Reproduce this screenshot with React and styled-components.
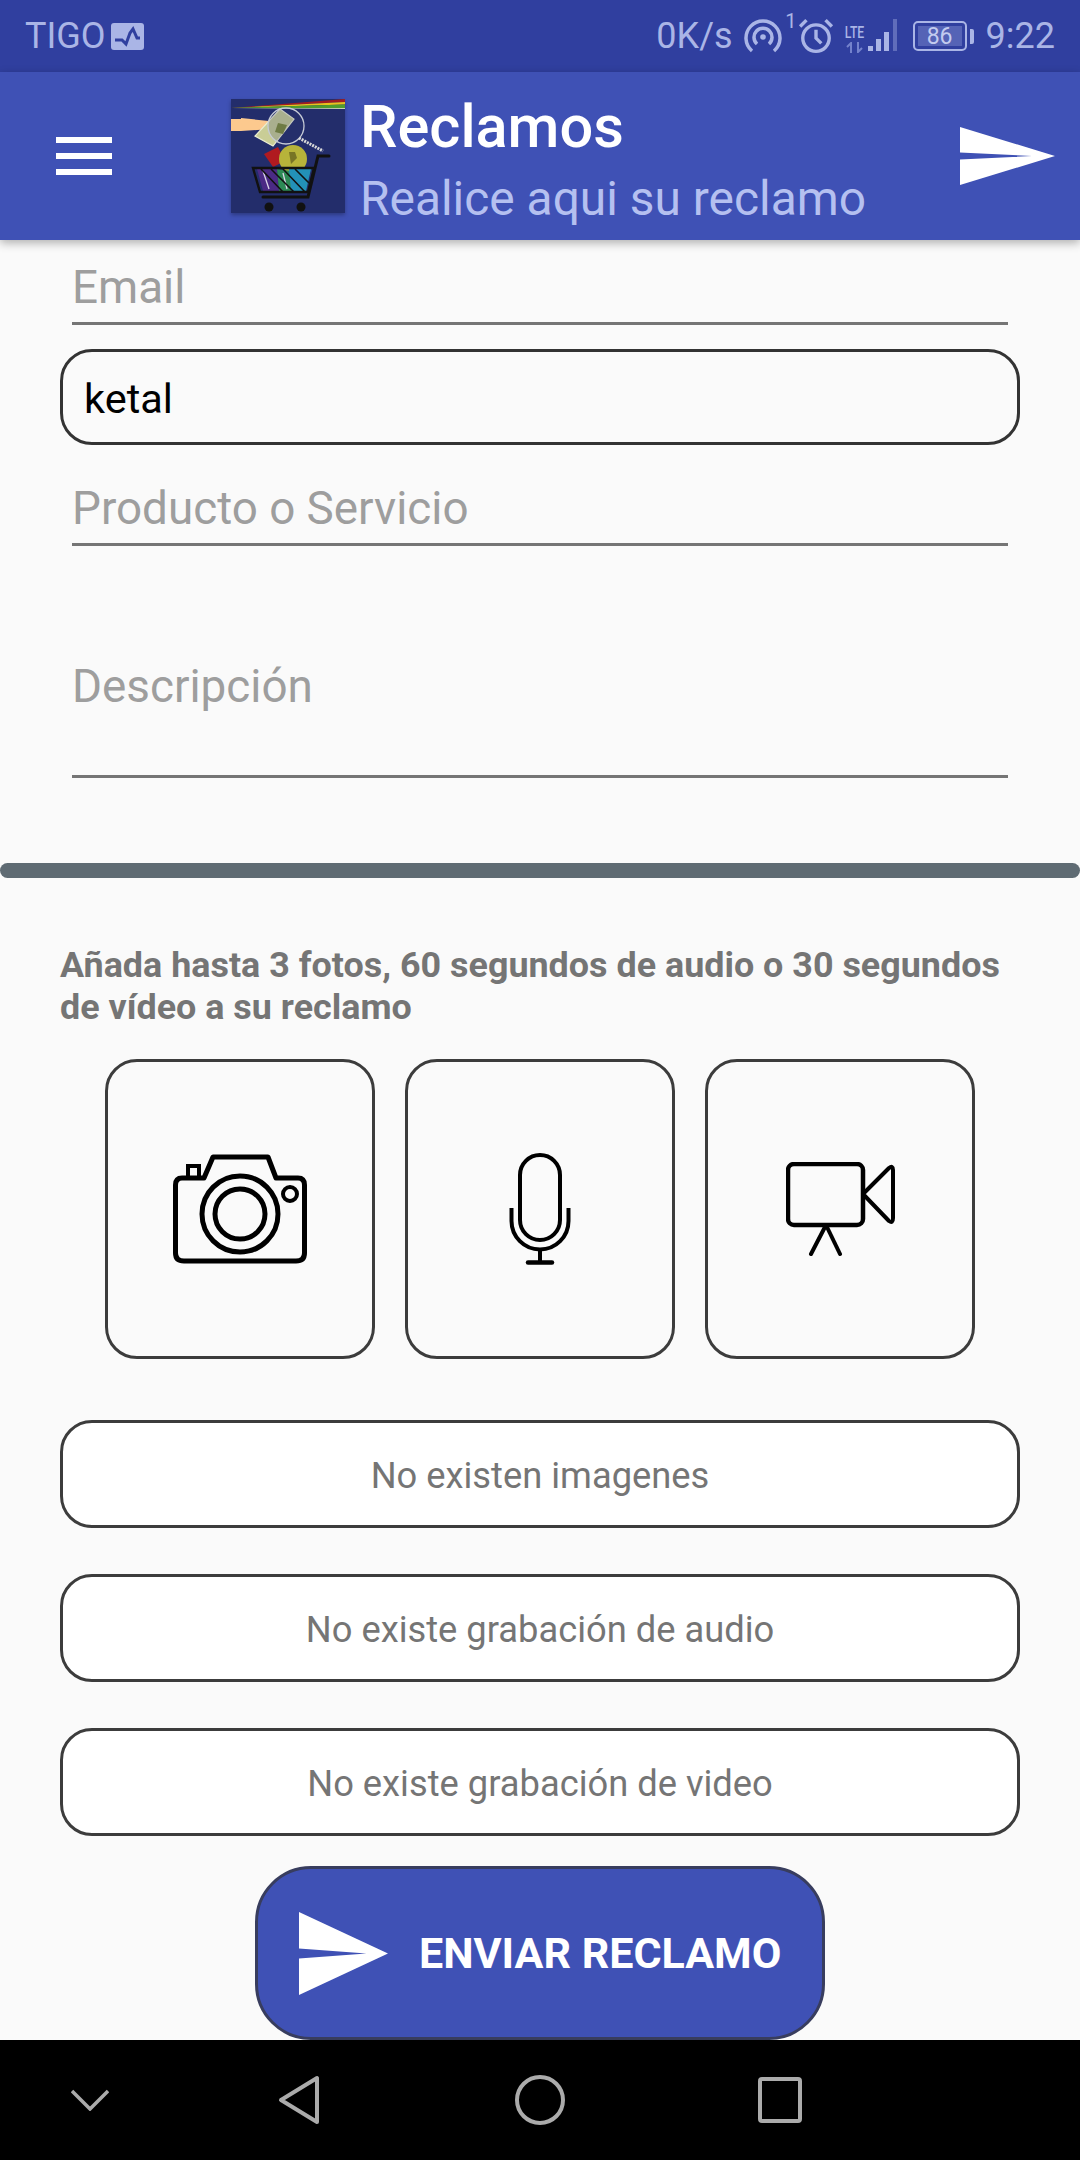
import React from "react";
import styled, { createGlobalStyle } from "styled-components";

const GlobalStyle = createGlobalStyle`
  html, body {
    margin: 0;
    padding: 0;
    background: #fafafa;
  }
  * {
    box-sizing: border-box;
  }
`;

const Page = styled.div`
  width: 1080px;
  height: 2160px;
  display: flex;
  flex-direction: column;
  overflow: hidden;
  background: #fafafa;
  font-family: Roboto, "Liberation Sans", sans-serif;
`;

const StatusBar = styled.div`
  height: 72px;
  flex: none;
  display: flex;
  align-items: center;
  justify-content: space-between;
  padding: 0 25px;
  background: #303f9f;
  color: #aab5e6;
`;

const StatusGroup = styled.div`
  display: flex;
  align-items: center;
  gap: ${(props) => props.$gap || 8}px;
`;

const StatusText = styled.span`
  font-size: ${(props) => props.$size || 36}px;
  line-height: 1;
`;

const HotspotWrap = styled.div`
  position: relative;
  display: flex;
  width: 48px;
  margin-left: 5px;
`;

const HotspotNumber = styled.span`
  position: absolute;
  right: -5px;
  top: -8px;
  font-size: 20px;
  line-height: 1;
`;

const Network = styled.div`
  display: flex;
  align-items: flex-end;
  gap: 2px;
  margin-left: 4px;
`;

const NetworkLabels = styled.div`
  display: flex;
  flex-direction: column;
  align-items: center;
  width: 22px;
  gap: 1px;
`;

const Lte = styled.span`
  font-size: 17px;
  line-height: 17px;
  font-weight: 500;
  transform: scaleX(0.72);
`;

const Battery = styled.div`
  display: flex;
  align-items: center;
  gap: 3px;
  margin-left: 7px;
  margin-right: 6px;
`;

const BatteryShell = styled.div`
  width: 54px;
  height: 30px;
  padding: 3px;
  border: 2px solid #aab5e6;
  border-radius: 5px;
`;

const BatteryLevel = styled.div`
  height: 100%;
  display: flex;
  align-items: center;
  justify-content: center;
  background: #5563b6;
  font-size: 23px;
  line-height: 1;
  color: #c3cbef;
`;

const BatteryNub = styled.div`
  width: 4px;
  height: 15px;
  border-radius: 0 2px 2px 0;
  background: #aab5e6;
`;

const AppBar = styled.div`
  position: relative;
  z-index: 1;
  height: 168px;
  flex: none;
  display: flex;
  align-items: center;
  padding: 0 25px 0 56px;
  background: #3f51b5;
  box-shadow: 0 3px 9px rgba(0, 0, 0, 0.3);
`;

const MenuIcon = styled.div`
  width: 56px;
  height: 38px;
  flex: none;
  display: flex;
  flex-direction: column;
  justify-content: space-between;
  margin-right: 119px;
`;

const MenuLine = styled.span`
  height: 6px;
  background: #fff;
`;

const LogoBox = styled.div`
  width: 114px;
  height: 114px;
  flex: none;
  display: flex;
  margin-right: 15px;
  box-shadow: 0 2px 4px rgba(0, 0, 0, 0.3);
`;

const Titles = styled.div`
  flex: 1;
  display: flex;
  flex-direction: column;
  padding-top: 7px;
`;

const Title = styled.div`
  font-size: 59.5px;
  line-height: 70px;
  font-weight: 500;
  color: #fff;
`;

const Subtitle = styled.div`
  font-size: 47.9px;
  line-height: 58px;
  margin-top: 8px;
  color: #b5c0f0;
`;

const Content = styled.div`
  flex: 1;
  display: flex;
  flex-direction: column;
  min-height: 0;
`;

const Form = styled.div`
  display: flex;
  flex-direction: column;
  padding: 20px 60px 0;
`;

const Field = styled.div`
  margin: ${(props) => props.$top}px 12px 0;
  padding-bottom: ${(props) => props.$bottom}px;
  border-bottom: 3px solid #757575;
  font-size: 45.8px;
  line-height: 54px;
  color: #9e9e9e;
`;

const ValueBox = styled.div`
  height: 96px;
  margin-top: 24px;
  display: flex;
  align-items: center;
  padding: 2px 0 0 21px;
  border: 3px solid #333;
  border-radius: 32px;
  font-size: 41.5px;
  color: #000;
`;

const Divider = styled.div`
  height: 15px;
  margin-top: 85px;
  flex: none;
  border-radius: 8px;
  background: #5f6b73;
`;

const Media = styled.div`
  display: flex;
  flex-direction: column;
  padding: 66px 60px 0;
`;

const Note = styled.div`
  font-size: 35.9px;
  line-height: 42px;
  font-weight: 700;
  color: #757575;
`;

const Tiles = styled.div`
  display: flex;
  justify-content: center;
  gap: 30px;
  margin-top: 31px;
`;

const Tile = styled.div`
  width: 270px;
  height: 300px;
  display: flex;
  align-items: center;
  justify-content: center;
  border: 3px solid #3c3c3c;
  border-radius: 32px;
`;

const StatusList = styled.div`
  display: flex;
  flex-direction: column;
  gap: 46px;
  margin-top: 61px;
`;

const StatusRow = styled.div`
  height: 108px;
  display: flex;
  align-items: center;
  justify-content: center;
  padding-top: 3px;
  border: 3px solid #3c3c3c;
  border-radius: 32px;
  background: #fff;
  font-size: 36.3px;
  color: #757575;
`;

const SendButton = styled.div`
  width: 570px;
  height: 174px;
  margin: 30px auto 0;
  display: flex;
  align-items: center;
  gap: 31px;
  padding-left: 41px;
  border: 3px solid #383d5e;
  border-radius: 56px;
  background: #3f51b5;
  font-size: 43px;
  font-weight: 700;
  color: #fff;
`;

const NavBar = styled.div`
  height: 120px;
  flex: none;
  display: flex;
  align-items: center;
  padding-left: 71px;
  background: #000;
`;

const NavSlot = styled.div`
  display: flex;
  margin-left: ${(props) => props.$left || 0}px;
`;

function SendIcon({ width, height }) {
  return (
    <svg width={width} height={height} viewBox="0 0 95 58" preserveAspectRatio="none">
      <path d="M0 0 L95 29 L0 58 L0 32.5 L72 29 L0 25.5 Z" fill="#fff" />
    </svg>
  );
}

function ActivityBadge() {
  return (
    <svg width="33" height="27" viewBox="0 0 33 27">
      <rect width="33" height="27" rx="3" fill="#aab5e6" />
      <path d="M4 17 H11 L15 21 L19 10 L22 6 L26 15 H29" fill="none" stroke="#303f9f" strokeWidth="3" />
    </svg>
  );
}

function HotspotIcon() {
  return (
    <svg width="38" height="34" viewBox="0 0 38 34" fill="none" stroke="#aab5e6" strokeWidth="3.5">
      <path d="M8 32 A17 17 0 1 1 30 32" />
      <path d="M13 25 A9 9 0 1 1 25 25" />
      <circle cx="19" cy="18" r="2.8" fill="#aab5e6" stroke="none" />
    </svg>
  );
}

function AlarmIcon() {
  return (
    <svg width="36" height="36" viewBox="0 0 34 34" fill="none" stroke="#aab5e6" strokeWidth="3.2">
      <circle cx="17" cy="19" r="12.5" />
      <path d="M17 11 V19 L22 24" />
      <path d="M2 8 L8 2" />
      <path d="M26 2 L32 8" />
    </svg>
  );
}

function SignalBars() {
  return (
    <svg width="32" height="34" viewBox="0 0 32 34" fill="#aab5e6">
      <rect x="0" y="27" width="5" height="5" />
      <rect x="8" y="20" width="5" height="12" />
      <rect x="16" y="13" width="5" height="19" />
      <rect x="25" y="0" width="4" height="32" opacity="0.4" />
    </svg>
  );
}

function DataArrows() {
  return (
    <svg width="20" height="11" viewBox="0 0 20 11" stroke="#7482cc" strokeWidth="2" fill="none">
      <path d="M6 11 V1 L2 5" />
      <path d="M13 0 V10 L17 6" />
    </svg>
  );
}

function LogoIcon() {
  return (
    <svg width="114" height="114" viewBox="0 0 114 114">
      <rect width="114" height="114" fill="#232d6b" />
      <polygon points="0,9 114,0 114,3" fill="#a11d22" />
      <polygon points="0,9 114,3 114,5.5" fill="#e9c21c" />
      <polygon points="0,9 114,5.5 114,9" fill="#4f9d2c" />
      <polygon points="0,10 114,9 114,10" fill="#c9d5b0" />
      <polygon points="0,20 10,20 10,19 38,22 40,30 10,32 0,32" fill="#fcc98e" />
      <polygon points="49,10 63,20 42,47 24,37" fill="#c9cd96" stroke="#eceed2" strokeWidth="1.2" />
      <polygon points="47,24 56,26 52,35 44,33" fill="#7f8c3a" />
      <circle cx="55" cy="27" r="18" fill="#2d3770" fillOpacity="0.2" stroke="#c6cbd6" strokeWidth="1.3" />
      <line x1="68" y1="39" x2="92" y2="52" stroke="#d8d8d8" strokeWidth="3" strokeDasharray="2 1" />
      <polygon points="33,55 47,48 54,62 42,68" fill="#b01a20" />
      <circle cx="62" cy="60" r="14" fill="#b7b33a" />
      <path d="M58 53 H64 L66 59 L60 65 Z" fill="#5d5a1c" opacity="0.7" />
      <polygon points="26,70 46,70 48,92 32,92" fill="#4b2a85" />
      <polygon points="46,70 60,72 62,92 48,92" fill="#2d8a55" />
      <polygon points="58,70 80,70 75,92 60,92" fill="#2391b8" />
      <path d="M32 72 L38 90 M52 74 L56 90" stroke="#d9d4e6" strokeWidth="1.3" fill="none" />
      <g stroke="#111" strokeWidth="1.6" fill="none">
        <path d="M30 70 L52 93 M40 70 L63 93 M52 70 L74 93 M64 70 L78 84" />
      </g>
      <g stroke="#111" strokeWidth="3" fill="none" strokeLinecap="round">
        <path d="M98 57 H87 L77 98 H32" />
        <path d="M22 69 H83 L77 93 H29 Z" strokeWidth="2.4" />
      </g>
      <circle cx="38" cy="108" r="4.5" fill="#111" />
      <circle cx="70" cy="108" r="4.5" fill="#111" />
    </svg>
  );
}

function CameraIcon() {
  return (
    <svg width="134" height="110" viewBox="0 0 134 110" fill="none" stroke="#000" strokeWidth="5">
      <path d="M13 24 H9 Q2.5 24 2.5 31 V99 Q2.5 107 11 107 H123 Q131.5 107 131.5 99 V31 Q131.5 24 125 24 H103 L95 3 H40 L31 24 Z" strokeLinejoin="round" />
      <path d="M15 24 V12 H26 V24" strokeWidth="4" />
      <circle cx="67" cy="60" r="38" />
      <circle cx="67" cy="60" r="25" />
      <circle cx="117" cy="40" r="7" strokeWidth="4" />
    </svg>
  );
}

function MicIcon() {
  return (
    <svg width="62" height="112" viewBox="0 0 62 112" fill="none" stroke="#000" strokeWidth="4">
      <rect x="11" y="2" width="40" height="85" rx="20" />
      <path d="M2.5 55 V68 A28.5 28.5 0 0 0 59.5 68 V55" />
      <path d="M31 97 V109" />
      <path d="M19 109.5 H43" strokeWidth="4.5" strokeLinecap="round" />
    </svg>
  );
}

function VideoIcon() {
  return (
    <svg width="109" height="94" viewBox="0 0 109 94" fill="none" stroke="#000" strokeWidth="4">
      <rect x="2" y="2" width="75" height="61" rx="6" strokeWidth="4.5" />
      <path d="M77 32 L103 6 Q107 3 107 8 V56 Q107 62 103 59 Z" strokeLinejoin="round" />
      <path d="M40 63 L25 92" strokeLinecap="round" />
      <path d="M40 63 L54 92" strokeLinecap="round" />
    </svg>
  );
}

function NavBack() {
  return (
    <svg width="42" height="50" viewBox="0 0 42 50" fill="none" stroke="#ababab" strokeWidth="4" strokeLinejoin="round">
      <path d="M39 3 V47 L3 25 Z" />
    </svg>
  );
}

function App() {
  return (
    <Page>
      <GlobalStyle />
      <StatusBar>
        <StatusGroup $gap={5}>
          <StatusText>TIGO</StatusText>
          <ActivityBadge />
        </StatusGroup>
        <StatusGroup $gap={6}>
          <StatusText>0K/s</StatusText>
          <HotspotWrap>
            <HotspotIcon />
            <HotspotNumber>1</HotspotNumber>
          </HotspotWrap>
          <AlarmIcon />
          <Network>
            <NetworkLabels>
              <Lte>LTE</Lte>
              <DataArrows />
            </NetworkLabels>
            <SignalBars />
          </Network>
          <Battery>
            <BatteryShell>
              <BatteryLevel>86</BatteryLevel>
            </BatteryShell>
            <BatteryNub />
          </Battery>
          <StatusText>9:22</StatusText>
        </StatusGroup>
      </StatusBar>

      <AppBar>
        <MenuIcon>
          <MenuLine />
          <MenuLine />
          <MenuLine />
        </MenuIcon>
        <LogoBox>
          <LogoIcon />
        </LogoBox>
        <Titles>
          <Title>Reclamos</Title>
          <Subtitle>Realice aqui su reclamo</Subtitle>
        </Titles>
        <SendIcon width={95} height={58} />
      </AppBar>

      <Content>
        <Form>
          <Field $top={1} $bottom={7}>Email</Field>
          <ValueBox>ketal</ValueBox>
          <Field $top={37} $bottom={7}>Producto o Servicio</Field>
          <Field $top={114} $bottom={61}>Descripción</Field>
        </Form>

        <Divider />

        <Media>
          <Note>Añada hasta 3 fotos, 60 segundos de audio o 30 segundos de vídeo a su reclamo</Note>
          <Tiles>
            <Tile><CameraIcon /></Tile>
            <Tile><MicIcon /></Tile>
            <Tile><VideoIcon /></Tile>
          </Tiles>
          <StatusList>
            <StatusRow>No existen imagenes</StatusRow>
            <StatusRow>No existe grabación de audio</StatusRow>
            <StatusRow>No existe grabación de video</StatusRow>
          </StatusList>
        </Media>

        <SendButton>
          <SendIcon width={89} height={83} />
          ENVIAR RECLAMO
        </SendButton>
      </Content>

      <NavBar>
        <NavSlot>
          <svg width="38" height="22" viewBox="0 0 38 22" fill="none" stroke="#ababab" strokeWidth="3.5">
            <path d="M1 2 L19 20 L37 2" />
          </svg>
        </NavSlot>
        <NavSlot $left={169}>
          <NavBack />
        </NavSlot>
        <NavSlot $left={195}>
          <svg width="50" height="50" viewBox="0 0 50 50" fill="none" stroke="#ababab" strokeWidth="4">
            <circle cx="25" cy="25" r="23" />
          </svg>
        </NavSlot>
        <NavSlot $left={193}>
          <svg width="44" height="46" viewBox="0 0 44 46" fill="none" stroke="#ababab" strokeWidth="4">
            <rect x="2" y="2" width="40" height="42" rx="2" />
          </svg>
        </NavSlot>
      </NavBar>
    </Page>
  );
}

export default App;
